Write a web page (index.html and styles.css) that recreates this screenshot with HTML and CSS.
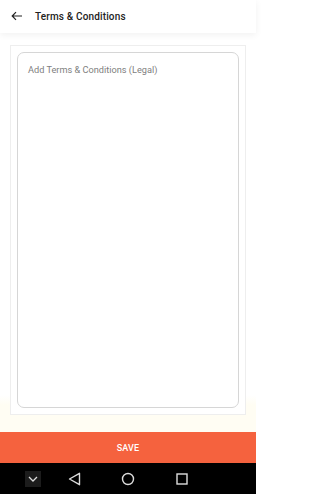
FILE: index.html
```html
<!DOCTYPE html>
<html>
<head>
<meta charset="utf-8">
<link rel="stylesheet" href="styles.css">
</head>
<body>
<div class="app">
  <header class="topbar">
    <svg class="back" width="12" height="10" viewBox="0 0 12 10"><path d="M11 5H1.5M5 1.2L1.2 5 5 8.8" fill="none" stroke="#222" stroke-width="1.2"/></svg>
    <span class="title">Terms &amp; Conditions</span>
  </header>
  <main class="content">
    <div class="card">
      <div class="field">Add Terms &amp; Conditions (Legal)</div>
    </div>
  </main>
  <button class="save">SAVE</button>
  <nav class="navbar">
    <span class="nav-item kb"><svg width="10" height="6" viewBox="0 0 10 6"><path d="M1 1l4 4 4-4" fill="none" stroke="#ddd" stroke-width="1.3"/></svg></span>
    <span class="nav-item"><svg width="13" height="14" viewBox="0 0 13 14"><path d="M1.5 7L11.5 1.3V12.7Z" fill="none" stroke="#ddd" stroke-width="1.4" stroke-linejoin="round"/></svg></span>
    <span class="nav-item"><svg width="14" height="14" viewBox="0 0 14 14"><circle cx="7" cy="7" r="5.5" fill="none" stroke="#ddd" stroke-width="1.4"/></svg></span>
    <span class="nav-item"><svg width="12" height="12" viewBox="0 0 12 12"><rect x="1" y="1" width="10" height="10" fill="none" stroke="#ddd" stroke-width="1.4"/></svg></span>
  </nav>
</div>
</body>
</html>
```

FILE: styles.css
```css
* { box-sizing: border-box; }
html, body { margin: 0; padding: 0; }
body { font-family: Roboto, "Noto Sans", sans-serif; background: #fff; }
.app { width: 256px; height: 494px; display: flex; flex-direction: column; }
.topbar {
  height: 33px; flex: none; display: flex; align-items: center;
  padding-left: 11px; gap: 12px; background: #fff;
  box-shadow: 0 2px 7px rgba(0,0,0,0.06);
  position: relative; z-index: 1;
}
.back { margin-top: -1px; }
.title { font-size: 10px; font-weight: 500; color: #222; letter-spacing: 0.15px; }
.content { flex: 1; padding: 12px 10px 17px; background: linear-gradient(#fff 0, #fff 362px, #fffdf3 372px); display: flex; }
.card { flex: 1; border: 1px solid #eee; padding: 6px; display: flex; background: #fff; }
.field {
  flex: 1; border: 1px solid #d6d6d6; border-radius: 7px;
  padding: 11px 10px; font-size: 9.2px; color: #808080;
}
.save {
  height: 31px; flex: none; border: 0; background: #f5623e; color: #fff;
  font-family: Roboto, sans-serif; font-size: 9px; font-weight: 500; letter-spacing: 0.2px; padding: 0;
}
.navbar { height: 31px; flex: none; background: #000; display: flex; align-items: center; padding-left: 25px; }
.nav-item { display: flex; align-items: center; justify-content: center; width: 16px; height: 16px; }
.nav-item.kb { background: #1c1c1c; margin-right: 25px; }
.nav-item:nth-child(2) { margin-right: 38px; }
.nav-item:nth-child(3) { margin-right: 38px; }
```
